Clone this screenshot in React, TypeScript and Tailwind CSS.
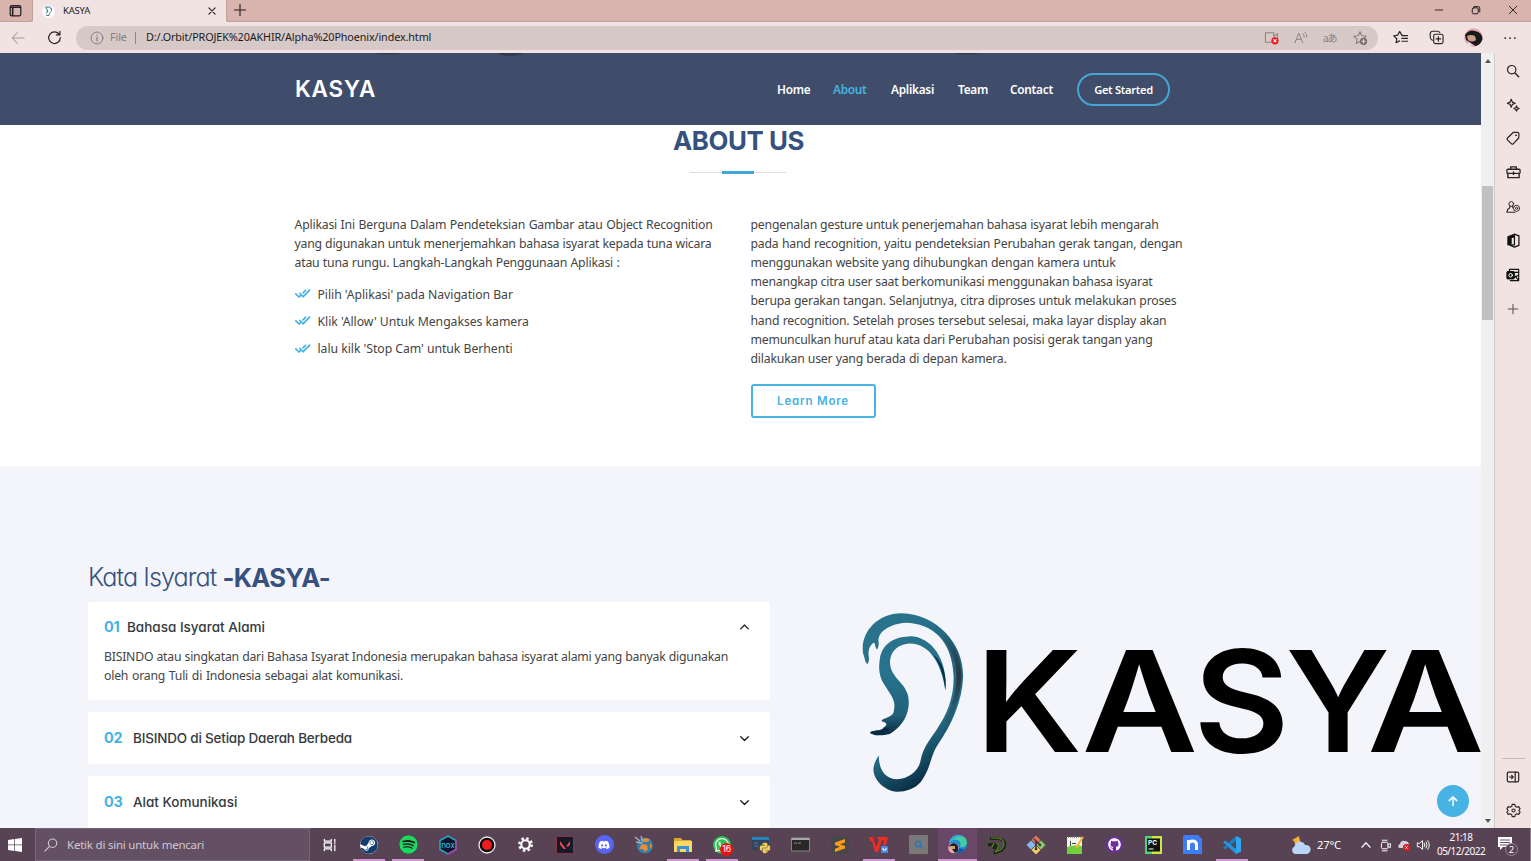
import type { ReactNode } from "react";
import { FaSpotify, FaDiscord, FaWhatsapp, FaGithub, FaSteam, FaPython } from "react-icons/fa";

const jost = "font-[Inter,sans-serif] [font-feature-settings:'cv11']";
const segoe = "font-['Noto_Sans',sans-serif]";

function Svg({ size = 16, children, className = "", vb = "0 0 16 16" }: { size?: number; children: ReactNode; className?: string; vb?: string }) {
  return (
    <svg width={size} height={size} viewBox={vb} fill="none" stroke="currentColor" strokeWidth="1.1" strokeLinecap="round" strokeLinejoin="round" className={`shrink-0 ${className}`}>
      {children}
    </svg>
  );
}

const STAR = "M8 1.8 9.8 5.8 14.2 6.3 10.9 9.2 11.8 13.5 8 11.4 4.2 13.5 5.1 9.2 1.8 6.3 6.2 5.8Z";

function TabBar() {
  return (
    <div className="flex h-[22px] bg-[#d9b3ad] text-[#222]">
      <div className="flex w-[33px] items-center justify-center rounded-br border-r border-b border-[#c19f9b] pr-0.5">
        <Svg size={13}>
          <rect x="1.5" y="2" width="13" height="12.5" rx="2" strokeWidth="1.5" />
          <path d="M2 4h12M4.500 4v10" strokeWidth="2" />
        </Svg>
      </div>
      <div className="flex w-[193px] items-center bg-[#f1e3e1] pl-[9px]">
        <div className="flex size-[13px] items-center justify-center rounded-full bg-white">
          <Ear className="h-[10px] w-[7px]" />
        </div>
        <span className={`${segoe} ml-[8px] w-[130px] text-[9.5px] tracking-[-0.2px]`}>KASYA</span>
        <Svg size={10} className="ml-[14px]">
          <path d="M3 3l10 10M13 3 3 13" strokeWidth="1.8" />
        </Svg>
      </div>
      <div className="flex flex-1 items-center rounded-bl border-b border-l border-[#c19f9b] pb-[2px] pl-[7px]">
        <Svg size={12}>
          <path d="M8 0.5v15M.5 8h15" strokeWidth="1.5" />
        </Svg>
      </div>
      <div className="flex w-[111px] items-center justify-around border-b border-[#c19f9b] pb-[2px]">
        <Svg size={10}><path d="M2 8h12" strokeWidth="1.5" /></Svg>
        <Svg size={10}>
          <rect x="2" y="4.5" width="9.5" height="9.5" rx="2" strokeWidth="1.6" />
          <path d="M5 2.5h6.5a2.5 2.5 0 0 1 2.5 2.500V11" strokeWidth="1.6" />
        </Svg>
        <Svg size={10}><path d="M2 2l12 12M14 2 2 14" strokeWidth="1.5" /></Svg>
      </div>
    </div>
  );
}

function Toolbar() {
  return (
    <div className="flex h-[31px] items-center bg-[#f1e3e1] text-[#2b2424]">
      <div className="flex w-[36px] justify-center text-[#a39b99]">
        <Svg size={14}><path d="M15 8H1.500M7 2 1.500 8 7 14" strokeWidth="1.200" /></Svg>
      </div>
      <div className="flex w-[36px] justify-center">
        <Svg size={15}><path d="M13.300 5A6.200 6.200 0 1 0 14.200 8M13.800 1.500V5.200H10" strokeWidth="1.300" /></Svg>
      </div>
      <div className="ml-[4px] flex h-[24px] w-[1302px] items-center rounded-full bg-[#d7c9c7] pl-[14px]">
        <Svg size={14} className="text-[#867c7b]">
          <circle cx="8" cy="8" r="6.800" />
          <path d="M8 7.200v4M8 4.600v.2" strokeWidth="1.400" />
        </Svg>
        <span className={`${segoe} ml-[6px] w-[18px] text-[10.800px] tracking-[-0.1px] text-[#867c7b]`}>File</span>
        <span className="ml-[7px] h-[12px] w-px bg-[#8f8584]" />
        <span className={`${segoe} ml-[10px] text-[10.800px] tracking-[-0.12px] text-[#1d1a1a]`}>D:/.Orbit/PROJEK%20AKHIR/Alpha%20Phoenix/index.html</span>
        <div className="ml-auto flex items-center gap-[15px] pr-[10px] text-[#8b807f]">
          <Svg size={15}>
            <path d="M1.500 3h9v10h-9zM10.500 6.500l4-2.500v6" />
            <circle cx="11.700" cy="11.500" r="3.900" fill="#f01818" stroke="none" />
            <path d="M10.500 10.300l2.400 2.400m0-2.400-2.400 2.400" stroke="#fff" />
          </Svg>
          <Svg size={14}><path d="M1 13.500 5.500 2.500 10 13.500M2.800 9.500h5.500M10.500 3.500q1.500 1.500 1.200 3.500M12.500 1.500q3 2.500 2.300 5.500" /></Svg>
          <span className="w-[14px] font-['Noto_Sans','Noto_Sans_CJK_JP',sans-serif] text-[10px] leading-none tracking-[-1px] whitespace-nowrap">aあ</span>
          <Svg size={16}>
            <path d={STAR} />
            <circle cx="11.500" cy="11.300" r="3.600" fill="#756b6a" stroke="none" />
            <path d="M9.800 11.300h3.400M11.500 9.600V13" stroke="#e6dcda" />
          </Svg>
        </div>
      </div>
      <div className="flex w-[45px] justify-center">
        <Svg size={15}><path d="M9.500 5.500 7 1.500 5 5.500.8 6.300 4 9.300 3.300 13.600 7 11.600M9.500 6h6M9.500 9h6M9.500 12h6" strokeWidth="1.300" /></Svg>
      </div>
      <div className="flex w-[27px] justify-center">
        <Svg size={15}>
          <rect x="5" y="4.500" width="10" height="10" rx="2" strokeWidth="1.200" />
          <path d="M10 7v5M7.500 9.500h5M3.500 11Q1.500 10 1.300 7.500V4Q1.500 1.300 4 1.300h5q2 0 2.500 1.500" strokeWidth="1.200" />
        </Svg>
      </div>
      <div className="flex w-[46px] justify-center">
        <svg width="19" height="19" viewBox="0 0 19 19">
          <circle cx="9.500" cy="9.500" r="9.300" fill="#e5a5b0" />
          <path d="M1 7Q5 1 11 3q7 1 7.500 8-2 6-7 7L7 15 2 12Z" fill="#17181a" />
          <path d="M3 8q4-2 8 0l1 4q-4 3-8 0Z" fill="#cf9d84" />
          <path d="M4 14l5 4-5-1Z" fill="#f4e8e8" />
        </svg>
      </div>
      <div className="flex w-[28px] justify-center">
        <Svg size={14}><path d="M2.500 8h.1M8 8h.1M13.500 8h.1" strokeWidth="2" /></Svg>
      </div>
    </div>
  );
}

function Ear({ className }: { className: string }) {
  return (
    <svg viewBox="25 38 237 536" preserveAspectRatio="none" className={className}>
      <defs>
        <linearGradient id="rim" x1="0.2" y1="0" x2="0.55" y2="1">
          <stop offset="0.15" stopColor="#28728c" />
          <stop offset="0.42" stopColor="#236179" />
          <stop offset="0.68" stopColor="#28728c" />
          <stop offset="0.98" stopColor="#082b42" />
        </linearGradient>
        <linearGradient id="shade" x1="0" y1="0" x2="0" y2="1">
          <stop offset="0" stopColor="#28363f" stopOpacity="0" />
          <stop offset="0.45" stopColor="#28363f" />
          <stop offset="1" stopColor="#28363f" stopOpacity="0" />
        </linearGradient>
        <linearGradient id="fold" x1="0" y1="0" x2="0" y2="1">
          <stop offset="0.4" stopColor="#28728c" />
          <stop offset="0.8" stopColor="#226079" />
          <stop offset="1" stopColor="#082b42" />
        </linearGradient>
      </defs>
      <path fill="url(#rim)" d="M40 191C33 184 35 176 30 160C22 100 60 40 118 39C200 42 262 130 260 230C258 300 235 370 202 432C183 470 187 500 163 543C150 563 130 573 108 573C75 570 50 530 54 500C56 485 61 475 66 465C66 510 82 535 108 536C135 534 158 510 162 480C168 440 182 420 200 385C224 340 240 285 238 225C235 120 188 68 127 67C95 70 66 90 65 120C67 132 65 141 62 147C57 142 59 134 55 126C43 135 41 155 43 170C44 180 42 186 40 191Z" />
      <path fill="none" stroke="url(#shade)" strokeWidth="11" d="M205 90C262 165 265 260 215 385" />
      <path fill="url(#fold)" d="M219 269C211 195 185 127 135 129C102 134 91 162 92 190C94 230 124 245 132 280C142 325 126 375 91 400C74 405 56 406 46 397C48 389 66 392 74 386C77 379 85 377 83 370C81 362 74 366 72 360C79 350 96 351 100 335C107 300 95 287 80 255C67 232 65 203 68 180C71 134 98 109 135 108C185 105 226 177 219 269Z" />
      <path fill="#082b42" d="M219 269C216 225 207 189 191 164C209 178 224 220 219 269ZM46 397C48 389 66 392 74 386C82 382 88 380 92 380C88 392 76 403 59 404Z" />
    </svg>
  );
}

function Line({ w, children }: { w: string; children: ReactNode }) {
  return <span className={`block whitespace-nowrap [text-align-last:justify] ${w}`}>{children}</span>;
}

function Check({ w, children }: { w: string; children: ReactNode }) {
  return (
    <li className="flex h-[27.200px] items-center">
      <Svg size={16} className="mr-[7px] text-[#47b2e4]">
        <path d="M.8 7.800 4 11 5.200 9.900M4.800 7.300 8 10.800 14.600 4.200M8 6.900 10.500 4.300" strokeWidth="1.700" />
      </Svg>
      <Line w={w}>{children}</Line>
    </li>
  );
}

function SiteHeader() {
  return (
    <header className={`${segoe} flex h-[72px] shrink-0 flex-col bg-[#3f4d6a] text-[11.800px] font-semibold tracking-[-0.25px] text-white`}>
      <div className="flex h-[3px] text-[#303c55]">
        <svg width="1200" height="3" fill="currentColor"><ellipse cx="388" cy="0" rx="12" ry="1.500" /><ellipse cx="510" cy="0" rx="12" ry="3" /><ellipse cx="967" cy="0" rx="12" ry="1.500" /></svg>
      </div>
      <div className="flex h-[68px] items-center pl-[295px]">
        <span className={`${jost} w-[482px] pb-[1px] text-[22.500px] leading-none font-semibold tracking-[0.8px]`}>KASYA</span>
        <nav className="flex items-center">
          <a className="w-[56px]">Home</a>
          <a className="w-[58px] text-[#47b2e4]">About</a>
          <a className="w-[67px]">Aplikasi</a>
          <a className="w-[52px]">Team</a>
          <a className="w-[67px]">Contact</a>
          <a className="mb-px flex h-[33px] w-[93px] items-center justify-center rounded-full border-2 border-[#47a5d6] pt-px text-[11.100px] tracking-[-0.28px]">Get Started</a>
        </nav>
      </div>
    </header>
  );
}

function About() {
  return (
    <section className="flex h-[341px] shrink-0 flex-col bg-white">
      <h2 className={`${jost} ml-[673px] flex h-[32px] w-[131px] items-center text-[25.800px] font-bold tracking-[-0.4px] whitespace-nowrap text-[#37517e]`}>ABOUT US</h2>
      <div className="mt-[14px] ml-[690px] flex h-[3px] w-[96px] items-center">
        <span className="h-px flex-1 bg-[#ddd]" />
        <span className="h-[3px] w-[32px] bg-[#40a6db]" />
        <span className="h-px flex-1 bg-[#ddd]" />
      </div>
      <div className={`${segoe} mt-[40.500px] flex pl-[294.500px] text-[12.250px] leading-[19.200px] tracking-[-0.2px] text-[#444]`}>
        <div className="w-[456px]">
          <Line w="w-[418px]">Aplikasi Ini Berguna Dalam Pendeteksian Gambar atau Object Recognition</Line>
          <Line w="w-[417px]">yang digunakan untuk menerjemahkan bahasa isyarat kepada tuna wicara</Line>
          <Line w="w-[325px]">atau tuna rungu. Langkah-Langkah Penggunaan Aplikasi :</Line>
          <ul className="mt-[8.500px] tracking-[-0.05px]">
            <Check w="w-[195px]">Pilih 'Aplikasi' pada Navigation Bar</Check>
            <Check w="w-[210px]">Klik 'Allow' Untuk Mengakses kamera</Check>
            <Check w="w-[193px]">lalu kilk 'Stop Cam' untuk Berhenti</Check>
          </ul>
        </div>
        <div>
          <Line w="w-[408px]">pengenalan gesture untuk penerjemahan bahasa isyarat lebih mengarah</Line>
          <Line w="w-[432px]">pada hand recognition, yaitu pendeteksian Perubahan gerak tangan, dengan</Line>
          <Line w="w-[365px]">menggunakan website yang dihubungkan dengan kamera untuk</Line>
          <Line w="w-[402px]">menangkap citra user saat berkomunikasi menggunakan bahasa isyarat</Line>
          <Line w="w-[426px]">berupa gerakan tangan. Selanjutnya, citra diproses untuk melakukan proses</Line>
          <Line w="w-[416px]">hand recognition. Setelah proses tersebut selesai, maka layar display akan</Line>
          <Line w="w-[402px]">memunculkan huruf atau kata dari Perubahan posisi gerak tangan yang</Line>
          <Line w="w-[256px]">dilakukan user yang berada di depan kamera.</Line>
          <button className={`${jost} mt-[16px] flex h-[34px] w-[125px] items-center justify-center rounded-[3px] border-2 border-[#47b2e4] pt-px text-[11.500px] font-semibold tracking-[0.800px] text-[#47b2e4]`}>Learn More</button>
        </div>
      </div>
    </section>
  );
}

function Question({ n, nw, title, tight, open, children }: { n: string; nw: string; title: string; tight?: boolean; open?: boolean; children?: ReactNode }) {
  return (
    <div className={`rounded-[3px] bg-white px-[16px] ${open ? "h-[98px] pt-[15px]" : "h-[52px] pt-[16px]"}`}>
      <div className={`${jost} flex h-[20px] items-center text-[13.500px] font-medium whitespace-nowrap text-[#343a40] ${tight ? "tracking-[-0.2px]" : ""}`}>
        <span className={`${nw} text-[14.500px] font-bold tracking-[-0.3px] text-[#47b2e4]`}>{n}</span>
        {title}
        <Svg size={11} className="mr-[4px] ml-auto text-[#222]">
          <path d={open ? "M2.500 10 8 4.500l5.500 5.500" : "M2.500 5.500 8 11l5.500-5.500"} strokeWidth="2" />
        </Svg>
      </div>
      {children}
    </div>
  );
}

function LogoLetter({ x, scale, children }: { x: number; scale: number; children: string }) {
  return <text transform={`translate(${x} 752) scale(${scale} 1)`}>{children}</text>;
}

function Words() {
  return (
    <section className="flex h-[362px] shrink-0 overflow-hidden bg-[#f3f5fa] pl-[88px]">
      <div className="w-[682px] pt-[90px]">
        <h3 className={`${jost} mb-[2px] flex h-[44px] items-center whitespace-nowrap text-[#37517e]`}>
          <span className="w-[134.500px] text-[25.200px] font-light tracking-[-0.950px]">Kata Isyarat</span>
          <span className="text-[25.500px] font-bold tracking-[-0.7px]">-KASYA-</span>
        </h3>
        <div className="flex flex-col gap-[12px]">
          <Question n="01" nw="w-[23px]" title="Bahasa Isyarat Alami" open>
            <div className={`${segoe} mt-[9.500px] text-[12.250px] leading-[19.200px] tracking-[-0.22px] text-[#444]`}>
              <Line w="w-[624px]">BISINDO atau singkatan dari Bahasa Isyarat Indonesia merupakan bahasa isyarat alami yang banyak digunakan</Line>
              <Line w="w-[299px]">oleh orang Tuli di Indonesia sebagai alat komunikasi.</Line>
            </div>
          </Question>
          <Question n="02" nw="w-[29px]" title="BISINDO di Setiap Daerah Berbeda" tight />
          <Question n="03" nw="w-[29px]" title="Alat Komunikasi" />
        </div>
      </div>
      <Ear className="mt-[147px] ml-[91px] h-[179px] w-[103px] shrink-0" />
      <svg width="517" height="362" viewBox="964 466 517 362" className="shrink-0" fontFamily="Inter, sans-serif" fontSize="140.500" fontWeight="600" fill="#000">
        <LogoLetter x={975.5} scale={1.08}>K</LogoLetter>
        <LogoLetter x={1081.600} scale={1.14}>A</LogoLetter>
        <LogoLetter x={1193.600} scale={1.05}>S</LogoLetter>
        <LogoLetter x={1285.600} scale={1.045}>Y</LogoLetter>
        <LogoLetter x={1367} scale={1.15}>A</LogoLetter>
      </svg>
    </section>
  );
}

function Scrollbar() {
  return (
    <div className="flex w-[14px] flex-col items-center border-r border-[#d0cbcb] bg-[#f0f0f0] pt-[6px] pb-[5px] text-[#555]">
      <svg width="6" height="4" fill="currentColor"><path d="M0 4 3 0 6 4Z" /></svg>
      <div className="mt-[123px] h-[134px] w-[11px] bg-[#c1c1c1]" />
      <svg width="6" height="4" fill="currentColor" className="mt-auto"><path d="M0 0 3 4 6 0Z" /></svg>
    </div>
  );
}

function Sidebar() {
  return (
    <aside className="flex flex-1 flex-col items-center bg-[#f1e3e1] pt-[11px] text-[#2b2424]">
      <div className="flex flex-col gap-[19.700px]">
        <Svg size={14}><circle cx="6.500" cy="6.500" r="4.800" strokeWidth="1.400" /><path d="M10.200 10.200 14.500 14.500" strokeWidth="1.700" /></Svg>
        <Svg size={14}><path d="M6 1.500 7.300 4.700 10.500 6 7.300 7.300 6 10.500 4.700 7.300 1.500 6 4.700 4.700ZM12 9l.9 2.100L15 12l-2.100.9L12 15l-.9-2.100L9 12l2.100-.9Z" strokeWidth="1.400" /></Svg>
        <Svg size={14}><path d="M8.500 1.500 13.500 1.500Q14.800 2 14.800 3.500L14.500 8 8.500 14.500Q7 15.500 5.700 14.200L1.700 10.200Q.8 8.900 2 7.700Z" strokeWidth="1.400" /><circle cx="11.300" cy="4.900" r=".5" /></Svg>
        <Svg size={15}><rect x="1" y="4.500" width="14" height="4.500" rx="1" strokeWidth="1.400" /><path d="M5 4.500V2h6v2.500M2 9v4.500h12V9M8 7.500v2.500" strokeWidth="1.500" /></Svg>
        <Svg size={14}><circle cx="6" cy="4.500" r="2.700" /><path d="M4.500 7Q5 9.500 2 10.500L1 14h9M7.500 7.200 8 9" strokeWidth="1.300" /><circle cx="12" cy="9.500" r="3.500" /><circle cx="12" cy="9.500" r="1.200" /></Svg>
        <Svg size={15} className="text-[#111]"><path d="M2 4 9 1.200V4L5.500 5v6.300L2 12.500Z" fill="currentColor" /><path d="M9 1.200 13.800 3v10.200L9 15 3 12.500l6 .3V4" strokeWidth="1.300" /></Svg>
        <Svg size={14} className="text-[#111]"><rect x="1" y="4" width="8.500" height="8.500" rx="1" fill="currentColor" /><circle cx="5.300" cy="8.300" r="2" stroke="#fff" /><path d="M4 4V1.500h10.500v13H5M9.500 8l5 6.500M14.500 8l-5 3M9 5h5" strokeWidth="1.300" /></Svg>
        <Svg size={14} className="text-[#5a5050]"><path d="M8 2.500v11M2.500 8h11" strokeWidth="1.200" /></Svg>
      </div>
      <div className="mt-auto mb-[11px] h-px w-[23px] bg-[#c8bcba]" />
      <Svg size={14} className="mb-[19px]"><rect x="1.500" y="2.500" width="13" height="11" rx="1.500" strokeWidth="1.400" /><path d="M10.500 2.500v11M4 8h4M6.500 6.300 8.200 8 6.500 9.700" strokeWidth="1.400" /></Svg>
      <Svg size={15} className="mb-[10px]"><path d="M6.600 1.500h2.800l.5 2 1.700 1 2-.6 1.400 2.400L13.600 8l1.400 1.700-1.400 2.400-2-.6-1.700 1-.5 2H6.600l-.5-2-1.700-1-2 .6L1 9.700 2.400 8 1 6.300l1.400-2.400 2 .6 1.700-1Z" strokeWidth="1.200" /><circle cx="8" cy="8" r="1.700" /></Svg>
    </aside>
  );
}

function TaskItem({ line, active, children }: { line?: boolean; active?: boolean; children: ReactNode }) {
  return (
    <div className={`flex w-[39.220px] shrink-0 flex-col items-center ${active ? "bg-[#6a4668]" : ""}`}>
      <div className="flex h-[31px] items-center pt-[2px]">{children}</div>
      {line && <div className={`h-[2px] bg-[#cd97cd] ${active ? "w-full" : "w-[32px]"}`} />}
    </div>
  );
}

function Taskbar() {
  return (
    <footer className={`${segoe} flex h-[33px] items-stretch bg-[#574354] text-white`}>
      <div className="flex w-[35px] items-center pl-[8px]">
        <svg width="14" height="14" viewBox="0 0 14 14" fill="#fff"><path d="M0 2 6.300 1.100v5.500H0ZM7 1 14 0v6.600H7ZM0 7.300h6.300V13L0 12ZM7 7.300h7V14L7 13Z" /></svg>
      </div>
      <div className="flex w-[275px] items-center border border-[#77657a] bg-[#635064] pt-px pl-[8px] text-[#d0c8d0]">
        <Svg size={14}><circle cx="9.800" cy="6" r="4.800" strokeWidth="1.300" /><path d="M6.300 9.500 1 15" strokeWidth="1.400" /></Svg>
        <span className="ml-[9px] text-[11.500px] tracking-[-0.22px]">Ketik di sini untuk mencari</span>
      </div>
      <div className="flex w-[39.500px] items-center justify-center">
        <Svg size={14}><path d="M1.500 1.500v2h8v-2M1.500 14.500v-2h8v2M1.500 5.500h8v5h-8zM13.500 1.500v3M13.500 8v6.500M13.500 5.700v.5" strokeWidth="1.400" /></Svg>
      </div>
      <TaskItem line><span className="rounded-full bg-white"><FaSteam size={18} color="#123c6c" /></span></TaskItem>
      <TaskItem line><span className="rounded-full bg-[#222]"><FaSpotify size={19} color="#1ed760" /></span></TaskItem>
      <TaskItem>
        <svg width="20" height="20" viewBox="0 0 20 20"><path d="M10 1 18 5.500v9L10 19 2 14.500v-9Z" fill="#10142c" stroke="#23a9c0" strokeWidth="1.500" /><path d="M18 5.500v9L10 19" fill="none" stroke="#b33aa6" strokeWidth="1.500" /><text x="10" y="12.500" textAnchor="middle" fontSize="8" fontFamily="Inter" fill="#27d5e0">nox</text></svg>
      </TaskItem>
      <TaskItem><svg width="18" height="18" viewBox="0 0 18 18"><circle cx="9" cy="9" r="8" fill="#0d0d0d" stroke="#f2e8f0" strokeWidth="1.300" /><circle cx="9" cy="9" r="5" fill="#ee1c1c" /></svg></TaskItem>
      <TaskItem><svg width="15" height="15" viewBox="0 0 16 16"><circle cx="8" cy="8" r="6.600" fill="none" stroke="#fff" strokeWidth="2.600" strokeDasharray="2.600 2.584" /><circle cx="8" cy="8" r="4.500" fill="none" stroke="#fff" strokeWidth="2.200" /></svg></TaskItem>
      <TaskItem><svg width="18" height="18" viewBox="0 0 18 18"><path d="M.5.500h17v17H.5z" fill="#131a26" stroke="#8a3144" /><path d="M4 5 10 13H7.500L4 8.500ZM14 5v3.500L12.500 10.500H10Z" fill="#f0475a" /></svg></TaskItem>
      <TaskItem><span className="flex size-[19px] items-center justify-center rounded-full bg-[#5865f2]"><FaDiscord size={12} /></span></TaskItem>
      <TaskItem>
        <svg width="20" height="20" viewBox="0 0 20 20"><circle cx="11" cy="10.500" r="8" fill="#357fa8" /><path d="M9 4q4-2 7 1l-3 2-3 0ZM8 9l5 1 1 4-3 3-2-3-4 0ZM16 8l2 3-2 3Z" fill="#f18b35" /><path d="M1 2l5 4M2 7l6 1M7 1l2 6" stroke="#a9b5bc" strokeWidth="1.300" /></svg>
      </TaskItem>
      <TaskItem line><svg width="18" height="16" viewBox="0 0 18 16"><path d="M0 1h7l1.500 2H17v12H0Z" fill="#dea52c" /><path d="M0 4h18v11H0Z" fill="#fdd766" /><path d="M3 9h12v6h-3v-3H6v3H3Z" fill="#3894d7" /></svg></TaskItem>
      <TaskItem line>
        <div className="relative">
          <span className="flex size-[18px] items-center justify-center rounded-full bg-[#2bc451]"><FaWhatsapp size={16} /></span>
          <span className="absolute top-[7px] left-[7px] flex h-[13px] w-[13px] items-center justify-center rounded-full bg-[#ee1111] font-[Inter,sans-serif] text-[8.500px] leading-none tracking-[-0.3px]">16</span>
        </div>
      </TaskItem>
      <TaskItem>
        <div className="relative">
          <svg width="18" height="18" viewBox="0 0 18 18"><path d="M0 1h17v13H0z" fill="#34465b" /><path d="M0 1h17v3H0z" fill="#2583bd" /><path d="M2 7h4M2 10h4" stroke="#61748b" /></svg>
          <FaPython size={12} color="#f1cf5a" className="absolute top-[6px] left-[7px]" />
        </div>
      </TaskItem>
      <TaskItem><svg width="19" height="15" viewBox="0 0 19 15"><path d="M.5 1h18v13H.5z" fill="#292929" stroke="#858585" /><path d="M.5 1h18v2H.5z" fill="#a6a6a6" /><path d="M3 6h2l1 1m1-1h3" stroke="#ddd" strokeWidth=".6" /></svg></TaskItem>
      <TaskItem><svg width="18" height="18" viewBox="0 0 18 18"><rect width="18" height="18" rx="2" fill="#484848" /><path d="M4 6.500 14 3v3.500L9 8.200l5 1.800v2.500L4 16v-3.300l5-1.900L4 9Z" fill="#ff9c17" /></svg></TaskItem>
      <TaskItem line><svg width="20" height="19" viewBox="0 0 20 19"><path d="M0 2h4l3 10 3-7-2-3h11l-2 8-3 1 1-6h-2L9 17H6L3 6H1Z" fill="#f02c25" /><path d="M5 2l3 8" stroke="#8f2730" /><rect x="12" y="11" width="7" height="7" rx="1" fill="#4789ef" /><path d="M14 13v2h3v-2" stroke="#fff" fill="none" /></svg></TaskItem>
      <TaskItem><svg width="19" height="19" viewBox="0 0 19 19"><path d="M0 0h19v19H0z" fill="#7b7878" /><circle cx="9" cy="9" r="2.700" fill="none" stroke="#2d74b5" strokeWidth="1.500" /><path d="M11 11l2.500 2.500" stroke="#2d74b5" strokeWidth="1.500" /></svg></TaskItem>
      <TaskItem line active>
        <svg width="21" height="21" viewBox="0 0 21 21"><circle cx="11" cy="10" r="9" fill="#238cd4" /><path d="M2 9Q4 1 12 1q8 1 8 8-1 5-7 4 2-6-3-7-5-1-8 3" fill="#42cda3" /><path d="M2 9Q4 1 12 1q3 0 5 2-8-2-15 6" fill="#2cabe5" /><path d="M10 10q0 5 8 5-3 4-7 4-5-2-1-9" fill="#0b5bae" /><circle cx="6.500" cy="14" r="5.300" fill="#e8a8ae" /><path d="M2 12q5-6 9 0v5l-3 2-3-4Z" fill="#202020" /><path d="M3 12h5v3H3Z" fill="#cf9d84" /></svg>
      </TaskItem>
      <TaskItem><svg width="20" height="20" viewBox="0 0 20 20" fill="none" stroke="#172a10" strokeWidth="3"><path d="M3 3.500h8q7 1 7 6.500-1 6-11 8 4-3 3-9M1 10l7-1M7 8v6" /><path d="M4 3h7q6 1 6 7-1 5-9 7 4-3 3-9M7 8 5 12" stroke="#638b26" strokeWidth="1.100" /></svg></TaskItem>
      <TaskItem>
        <svg width="20" height="20" viewBox="0 0 20 20"><path d="M10 .5 14.500 5 10 9.500 5.500 5Z" fill="#e8705f" /><path d="M5 5.500 9.500 10 5 14.500.5 10Z" fill="#85b9ed" /><path d="M15 5.500 19.500 10 15 14.500 10.500 10Z" fill="#8ecb68" /><path d="M10 10.500 14.500 15 10 19.500 5.500 15Z" fill="#f3ce68" /><path d="M8 4l2 2v8m0-8 4 4" stroke="#333" strokeWidth="1.500" fill="none" /><circle cx="10" cy="14" r="1.300" fill="#333" /><circle cx="14" cy="10" r="1.300" fill="#333" /></svg>
      </TaskItem>
      <TaskItem><svg width="18" height="20" viewBox="0 0 18 20"><path d="M1 2h15v17H1z" fill="#f3f5e8" /><path d="M1 12q8-3 15-1v8H1z" fill="#71ce3c" /><path d="M2 2h13" stroke="#777" strokeDasharray="1 1" strokeWidth="1.500" /><path d="M4.500 6v5M6 8.500h4" stroke="#444" /><path d="M17 2 10 13" stroke="#edb528" strokeWidth="2" /></svg></TaskItem>
      <TaskItem><span className="flex size-[17px] items-center justify-center rounded-full bg-[#6e2d9d]"><FaGithub size={13} /></span></TaskItem>
      <TaskItem>
        <svg width="17" height="18" viewBox="0 0 17 18"><path d="M0 0h17v18H0z" fill="#cbe83d" /><path d="M0 0h7v18H0z" fill="#49d779" /><path d="M2 2.500h13v13H2z" fill="#101010" /><text x="3" y="9" fontSize="6.500" fontWeight="700" fontFamily="Inter" fill="#fff">PC</text><path d="M3.500 13h5" stroke="#fff" /></svg>
      </TaskItem>
      <TaskItem><svg width="19" height="19" viewBox="0 0 19 19"><path d="M1 0h14l4 4v15H0V1Z" fill="#3e7df3" /><path d="M5.500 15V5M5.500 9Q6 6 9.500 6q4 0 4 4v5" fill="none" stroke="#fff" strokeWidth="3" /></svg></TaskItem>
      <TaskItem line><svg width="20" height="20" viewBox="0 0 20 20"><path d="M14 1 19 3.500v13L14 19Z" fill="#2fa8ef" /><path d="M14 1v5L3 14.500 1 13Z" fill="#167fc4" /><path d="M14 19v-5L3 5.500 1 7Z" fill="#2397df" /></svg></TaskItem>
      <div className="ml-[39.500px] flex items-center pt-px text-[11.500px] tracking-[-0.2px]">
        <svg width="20" height="20" viewBox="0 0 20 20"><path d="M1 5 8 1q0 5 4 8H4l-1-3Z" fill="#f5b13a" /><path d="M4 19a4 4 0 0 1-.5-7.500A5.500 5.500 0 0 1 14 10a4.500 4.500 0 0 1 2 9Z" fill="#b9d6f5" /></svg>
        <span className="ml-[6px] w-[43px] text-[11.200px]">27°C</span>
        <Svg size={12}><path d="M2.500 11 8 5l5.500 6" strokeWidth="1.500" /></Svg>
        <Svg size={13} className="ml-[7px]"><rect x="3" y="4" width="8" height="8" rx="1.500" strokeWidth="1.200" /><path d="M11 7l3-1.500v5L11 9.500M4 1.500h6M4 14.500h6" strokeWidth="1.200" /></Svg>
        <svg width="14" height="14" viewBox="0 0 14 14" className="ml-[5px]"><path d="M2 10Q0 7 3 6q1-4 5-3 3 0 4 3-2 1-3 4Z" fill="#d6d0d6" /><circle cx="9.500" cy="9.500" r="3.600" fill="#d4202c" /><path d="m8.300 8.300 2.400 2.400m0-2.400-2.400 2.400" stroke="#fff" strokeWidth=".8" /></svg>
        <Svg size={14} className="ml-[5px]"><path d="M1.500 6v4h2.500l3.500 3V3L4 6ZM9.500 6q1.300 2 0 4M11.500 4.500q2.500 3.500 0 7M13.500 3q3.500 5 0 10" /></Svg>
      </div>
      <div className="ml-[5.500px] flex w-[51px] flex-col items-center justify-center pb-px text-[10px] leading-[14px] tracking-[-0.5px] whitespace-nowrap">
        <span>21:18</span>
        <span>05/12/2022</span>
      </div>
      <div className="relative ml-auto flex w-[33px] items-center border-r border-[#8c7b89] pb-[2px]">
        <svg width="14" height="14" viewBox="0 0 14 14"><path d="M0 0h14v10H5l-3 3v-3H0Z" fill="#fff" /><path d="M2 3h10M2 5.500h10M2 8h7" stroke="#68516a" strokeWidth="1" /></svg>
        <span className="absolute top-[15px] left-[7px] flex size-[13px] items-center justify-center rounded-full border border-[#9a859b] bg-[#574354] text-[9.500px] leading-none">2</span>
      </div>
    </footer>
  );
}

export default function App() {
  return (
    <div className="flex h-[861px] w-[1531px] flex-col overflow-hidden">
      <TabBar />
      <Toolbar />
      <div className="flex h-[775px]">
        <main className="relative flex w-[1481px] flex-col">
          <SiteHeader />
          <About />
          <Words />
          <a className="absolute right-[12px] bottom-[11px] flex size-[32px] items-center justify-center rounded-full bg-[#47b2e4] text-white">
            <Svg size={12}><path d="M8 14V2.500M3 7.500 8 2.500l5 5" strokeWidth="2" /></Svg>
          </a>
        </main>
        <Scrollbar />
        <Sidebar />
      </div>
      <Taskbar />
    </div>
  );
}
